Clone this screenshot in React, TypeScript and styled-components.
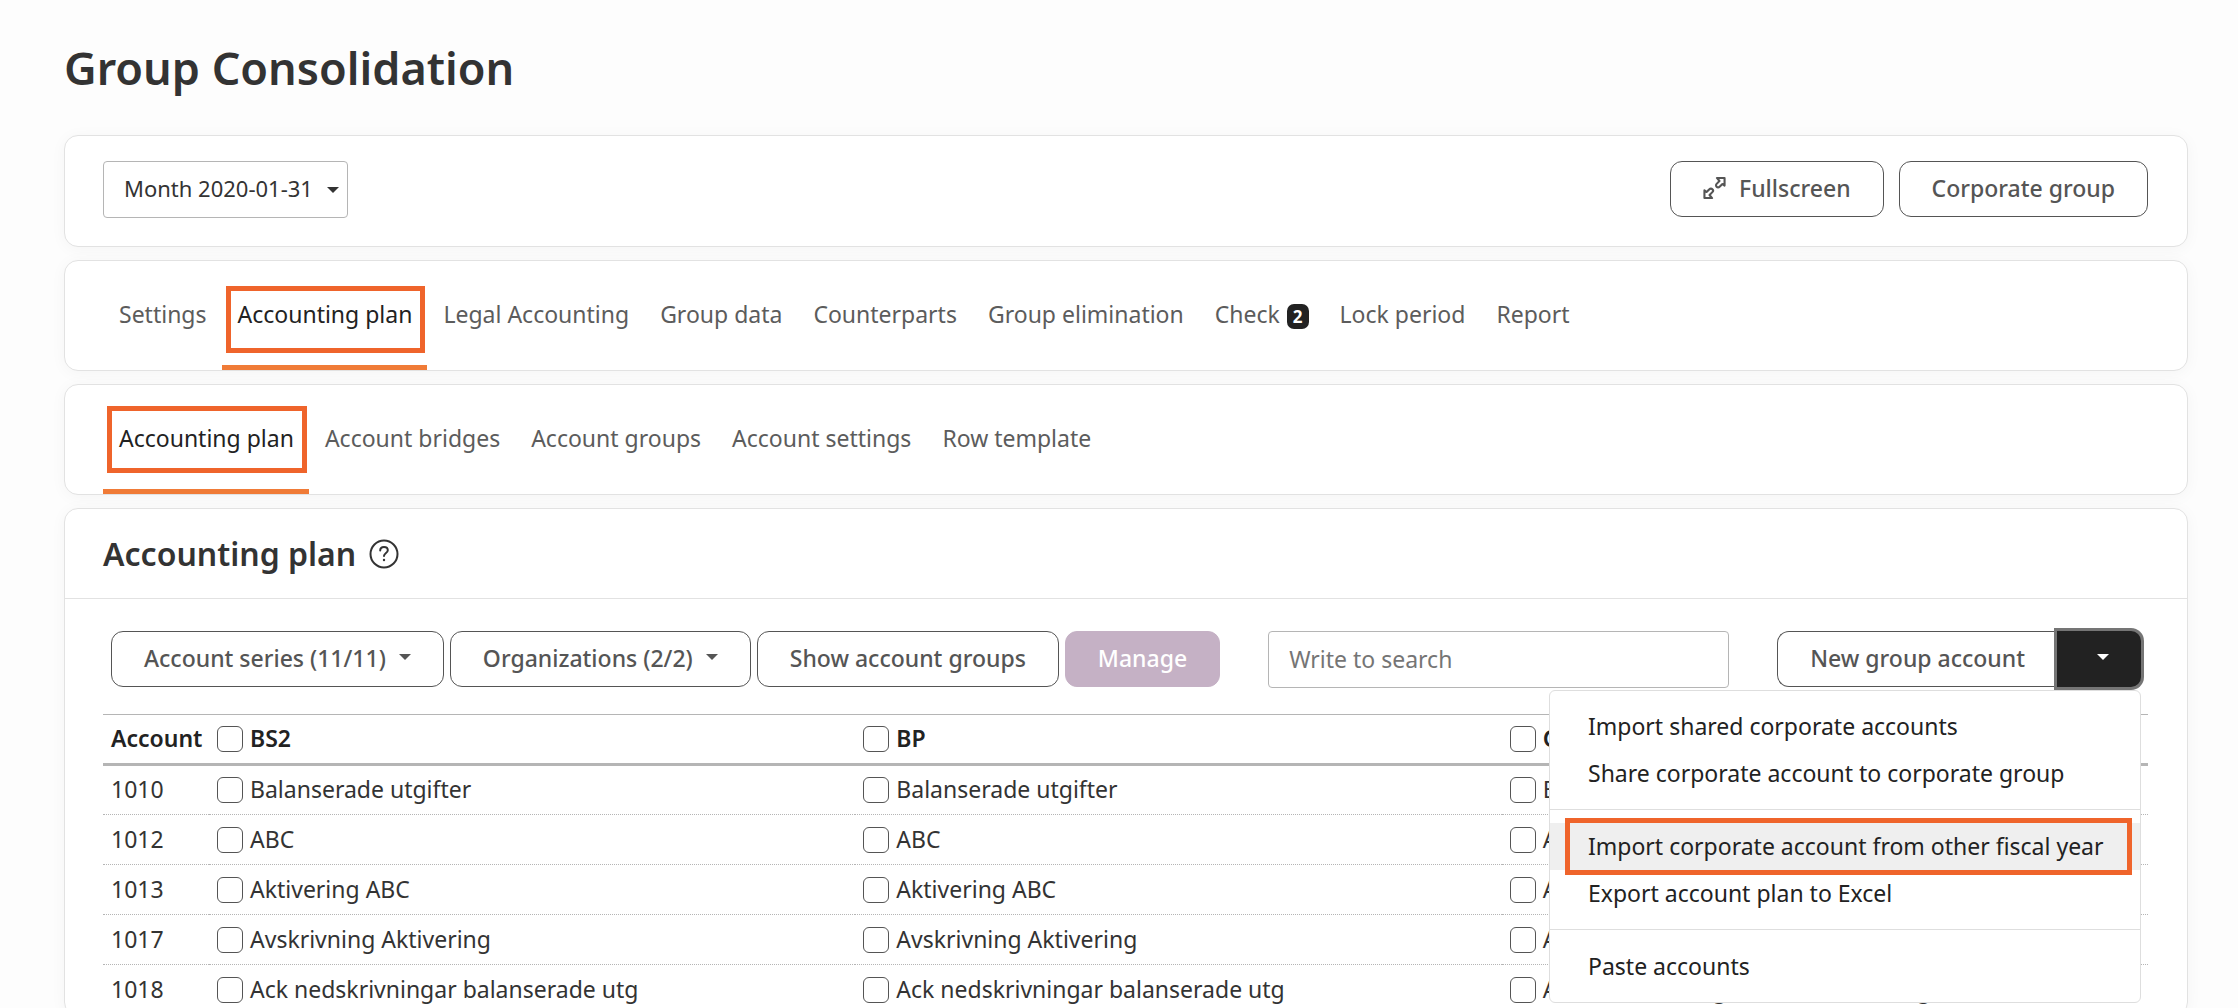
import React from "react";
import styled, { createGlobalStyle, css } from "styled-components";

const Global = createGlobalStyle`
  *, *::before, *::after { box-sizing: border-box; }
  body {
    margin: 0;
    background: #fdfdfd;
    color: #333;
    font-family: "Noto Sans", "Open Sans", sans-serif;
    font-size: 23px;
    line-height: 32px;
  }
  button, input, select { font: inherit; color: inherit; }
`;

const Page = styled.main`
  display: flex;
  flex-direction: column;
  gap: 13px;
  height: 100vh;
  overflow: hidden;
  padding: 38px 50px 0 64px;
`;

const PageTitle = styled.h1`
  margin: 0 0 24px;
  font-size: 45px;
  line-height: 60px;
  font-weight: 600;
`;

const Card = styled.section`
  flex: none;
  background: #fff;
  border: 1px solid #e2e2e2;
  border-radius: 14px;
  box-shadow: 0 2px 16px rgba(0, 0, 0, 0.04);
`;

const PeriodBar = styled(Card)`
  display: flex;
  justify-content: space-between;
  padding: 25px 39px 28px 38px;
`;

const ButtonRow = styled.div<{ $gap: number }>`
  display: flex;
  gap: ${(p) => p.$gap}px;
`;

const Button = styled.button<{ $filled?: boolean }>`
  display: inline-flex;
  align-items: center;
  height: 56px;
  padding: 0 32px 2px;
  border: 1px solid #555;
  border-radius: 12px;
  background: #fff;
  color: #555;
  font-weight: 500;
  white-space: nowrap;
  cursor: pointer;
  ${(p) =>
    p.$filled &&
    css`
      border-color: #c5b1c5;
      background: #c5b1c5;
      color: #fff;
    `}
`;

const Caret = styled.span`
  width: 0;
  height: 0;
  border: 6px solid transparent;
  border-top-color: currentColor;
  border-bottom: 0;
`;

const ButtonCaret = styled(Caret)`
  margin: 0 0 2px 13px;
`;

const SelectBox = styled.label`
  position: relative;
  display: flex;
`;

const Select = styled.select`
  appearance: none;
  height: 57px;
  padding: 0 34px 3px 20px;
  border: 1px solid #b5b5b5;
  border-radius: 4px;
  background: #fff;
  font-size: 22px;
`;

const SelectCaret = styled(Caret)`
  position: absolute;
  right: 9px;
  top: 26px;
`;

const Tabs = styled(Card)`
  display: flex;
  height: 111px;
  padding: 0 38px;
`;

const Tab = styled.a<{ $active?: boolean }>`
  position: relative;
  display: flex;
  gap: 7px;
  padding: 37px 15px 0 16px;
  border-bottom: 5px solid ${(p) => (p.$active ? "#f07b37" : "transparent")};
  color: ${(p) => (p.$active ? "#222" : "#5c5c5c")};
  text-decoration: none;
  white-space: nowrap;
`;

const Badge = styled.span`
  height: 25px;
  margin-top: 6px;
  padding: 0 6px;
  border-radius: 7px;
  background: #222;
  color: #fff;
  font-size: 17px;
  line-height: 25px;
  font-weight: 700;
`;

const TabMark = styled.span<{ $top: number }>`
  position: absolute;
  top: ${(p) => p.$top}px;
  left: 4px;
  right: 2px;
  height: 67px;
  border: 5px solid #ef642b;
  pointer-events: none;
`;

const CardHead = styled.header`
  display: flex;
  align-items: center;
  gap: 13px;
  height: 90px;
  padding: 0 38px;
  border-bottom: 1px solid #e2e2e2;
`;

const CardTitle = styled.h2`
  margin: 0;
  font-size: 32px;
  line-height: 44px;
  font-weight: 600;
`;

const CardBody = styled.div`
  padding: 32px 39px 0 38px;
`;

const Toolbar = styled.div`
  display: flex;
  gap: 48px;
  padding: 0 7px 26px 8px;
`;

const Search = styled.input`
  flex: 1;
  min-width: 0;
  height: 57px;
  padding: 0 20px 2px;
  border: 1px solid #b5b5b5;
  border-radius: 4px;
  background: #fff;
  &::placeholder { color: #757575; opacity: 1; }
`;

const Split = styled.div`
  position: relative;
  display: flex;
`;

const SplitMain = styled(Button)`
  border-right: 0;
  border-radius: 12px 0 0 12px;
`;

const SplitToggle = styled.button`
  display: flex;
  align-items: center;
  justify-content: center;
  width: 84px;
  height: 56px;
  padding: 0 0 4px 8px;
  border: 0;
  border-radius: 0 10px 10px 0;
  background: #222;
  box-shadow: 0 0 0 3px #757575;
  color: #fff;
`;

const Menu = styled.ul`
  position: absolute;
  z-index: 2;
  top: 59px;
  right: 0;
  width: 592px;
  margin: 0;
  padding: 12px 0;
  border: 1px solid #dedede;
  border-radius: 6px;
  background: #fff;
  list-style: none;
`;

const MenuItem = styled.li<{ $active?: boolean; $divided?: boolean }>`
  position: relative;
  background: ${(p) => (p.$active ? "#efefef" : "transparent")};
  ${(p) =>
    p.$divided &&
    css`
      margin-top: 26px;
      &::before {
        content: "";
        position: absolute;
        top: -14px;
        left: 0;
        right: 0;
        border-top: 1px solid #dedede;
      }
    `}
`;

const MenuLink = styled.a`
  display: block;
  padding: 7px 38px 8px;
  color: #222;
  text-decoration: none;
  white-space: nowrap;
`;

const MenuMark = styled.span`
  position: absolute;
  inset: -5px 8px -5px 15px;
  border: 5px solid #ef642b;
  pointer-events: none;
`;

const Table = styled.table`
  width: 100%;
  table-layout: fixed;
  border-collapse: collapse;
  border-top: 1px solid #b5b5b5;
`;

const Th = styled.th<{ $width?: number }>`
  width: ${(p) => (p.$width ? `${p.$width}px` : "auto")};
  height: 50px;
  padding: 0 8px 2px;
  border-bottom: 3px solid #b5b5b5;
  text-align: left;
  font-weight: 600;
  color: #222;
`;

const Td = styled.td`
  height: 50px;
  padding: 0 8px 2px;
  border-bottom: 1px dotted #b5b5b5;
`;

const Check = styled.label`
  display: flex;
  align-items: center;
  gap: 7px;
  white-space: nowrap;
`;

const Box = styled.input`
  appearance: none;
  width: 26px;
  height: 26px;
  margin: 2px 0 0;
  border: 1px solid #555;
  border-radius: 6px;
  background: #fff;
`;

const IconSlot = styled.span`
  display: flex;
  margin-right: 13px;
`;

const FullscreenIcon = () => (
  <IconSlot>
    <svg width="23" height="24" viewBox="0 0 24 24" fill="none" stroke="currentColor" strokeWidth="2.2" strokeLinejoin="round" aria-hidden="true">
      <path d="M14.500 1.500h8V9.500l-2.200-1.700-3 3c-.8.8-2.300.8-3.100 0s-.8-2.300 0-3.100l3-3z" />
      <path d="M9.500 22.500h-8V14.500l2.200 1.700 3-3c.8-.8 2.300-.8 3.100 0s.8 2.300 0 3.100l-3 3z" />
    </svg>
  </IconSlot>
);

const HelpIcon = () => (
  <svg width="30" height="30" viewBox="0 0 30 30" fill="none" stroke="currentColor" strokeWidth="2" strokeLinecap="round" role="img" aria-label="Help">
    <circle cx="15" cy="15" r="13.500" />
    <path d="M11.200 11.400c0-2.200 1.600-3.500 3.800-3.500s3.800 1.400 3.800 3.300c0 2.700-3.800 2.800-3.800 5.800" />
    <circle cx="15" cy="21" r="1.200" fill="currentColor" stroke="none" />
  </svg>
);

const mainTabs = [
  "Settings",
  "Accounting plan",
  "Legal Accounting",
  "Group data",
  "Counterparts",
  "Group elimination",
  "Check",
  "Lock period",
  "Report",
];
const subTabs = ["Accounting plan", "Account bridges", "Account groups", "Account settings", "Row template"];
const columns = ["BS2", "BP", "Group"];
const accounts: [string, string][] = [
  ["1010", "Balanserade utgifter"],
  ["1012", "ABC"],
  ["1013", "Aktivering ABC"],
  ["1017", "Avskrivning Aktivering"],
  ["1018", "Ack nedskrivningar balanserade utg"],
];
const menu = [
  { label: "Import shared corporate accounts" },
  { label: "Share corporate account to corporate group" },
  { label: "Import corporate account from other fiscal year", divided: true, active: true },
  { label: "Export account plan to Excel" },
  { label: "Paste accounts", divided: true },
];

const TabBar = ({ items, active, markTop }: { items: string[]; active: string; markTop: number }) => (
  <Tabs as="nav">
    {items.map((item) => (
      <Tab key={item} href="#" $active={item === active}>
        {item}
        {item === "Check" && <Badge>2</Badge>}
        {item === active && <TabMark $top={markTop} />}
      </Tab>
    ))}
  </Tabs>
);

export default function App() {
  return (
    <Page>
      <Global />
      <PageTitle>Group Consolidation</PageTitle>

      <PeriodBar>
        <SelectBox>
          <Select aria-label="Period" defaultValue="m">
            <option value="m">Month 2020-01-31</option>
          </Select>
          <SelectCaret />
        </SelectBox>
        <ButtonRow $gap={15}>
          <Button type="button">
            <FullscreenIcon />
            Fullscreen
          </Button>
          <Button type="button">Corporate group</Button>
        </ButtonRow>
      </PeriodBar>

      <TabBar items={mainTabs} active="Accounting plan" markTop={25} />
      <TabBar items={subTabs} active="Accounting plan" markTop={21} />

      <Card>
        <CardHead>
          <CardTitle>Accounting plan</CardTitle>
          <HelpIcon />
        </CardHead>
        <CardBody>
          <Toolbar>
            <ButtonRow $gap={6}>
              <Button type="button" aria-haspopup="menu">
                Account series (11/11)
                <ButtonCaret />
              </Button>
              <Button type="button" aria-haspopup="menu">
                Organizations (2/2)
                <ButtonCaret />
              </Button>
              <Button type="button">Show account groups</Button>
              <Button type="button" $filled>
                Manage
              </Button>
            </ButtonRow>
            <Search type="search" placeholder="Write to search" aria-label="Search" />
            <Split>
              <SplitMain type="button">New group account</SplitMain>
              <SplitToggle type="button" aria-label="More actions" aria-expanded="true">
                <Caret />
              </SplitToggle>
              <Menu>
                {menu.map((m) => (
                  <MenuItem key={m.label} $active={m.active} $divided={m.divided}>
                    <MenuLink href="#">{m.label}</MenuLink>
                    {m.active && <MenuMark />}
                  </MenuItem>
                ))}
              </Menu>
            </Split>
          </Toolbar>

          <Table>
            <thead>
              <tr>
                <Th $width={106}>Account</Th>
                {columns.map((c) => (
                  <Th key={c}>
                    <Check>
                      <Box type="checkbox" />
                      {c}
                    </Check>
                  </Th>
                ))}
              </tr>
            </thead>
            <tbody>
              {accounts.map(([number, name]) => (
                <tr key={number}>
                  <Td>{number}</Td>
                  {columns.map((c) => (
                    <Td key={c}>
                      <Check>
                        <Box type="checkbox" />
                        {name}
                      </Check>
                    </Td>
                  ))}
                </tr>
              ))}
            </tbody>
          </Table>
        </CardBody>
      </Card>
    </Page>
  );
}
